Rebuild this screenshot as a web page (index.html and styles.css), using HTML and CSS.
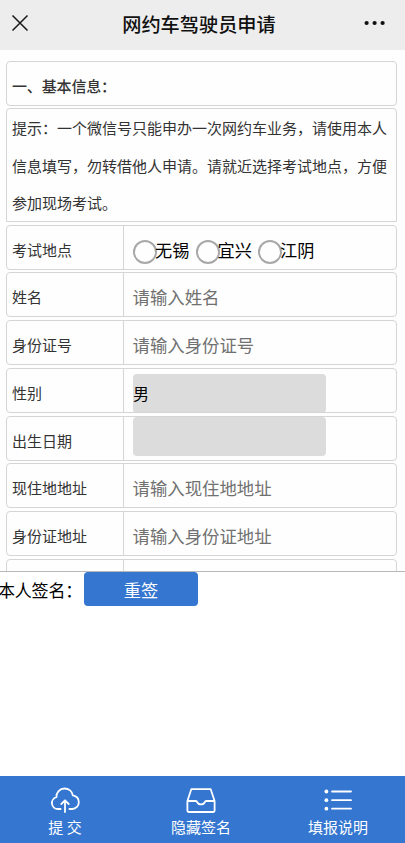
FILE: index.html
```html
<!DOCTYPE html>
<html lang="zh-CN">
<head>
<meta charset="utf-8">
<meta name="viewport" content="width=device-width, initial-scale=1">
<title>网约车驾驶员申请</title>
<link rel="stylesheet" href="styles.css">
</head>
<body>
<header class="topbar">
  <svg class="close" viewBox="0 0 18 18"><path d="M1.5 1.5 16.5 16.5M16.5 1.5 1.5 16.5"/></svg>
  <h1>网约车驾驶员申请</h1>
  <svg class="more" viewBox="0 0 22 6"><circle cx="2.6" cy="3" r="2.1"/><circle cx="10.6" cy="3" r="2.1"/><circle cx="18.6" cy="3" r="2.1"/></svg>
</header>
<main class="form">
  <h2 class="card heading">一、基本信息：</h2>
  <p class="card hint">提示：一个微信号只能申办一次网约车业务，请使用本人信息填写，勿转借他人申请。请就近选择考试地点，方便参加现场考试。</p>
  <div class="card row"><div class="label">考试地点</div><div class="field radios">
    <label><i class="radio"></i><span>无锡</span></label><label><i class="radio"></i><span>宜兴</span></label><label><i class="radio"></i><span>江阴</span></label>
  </div></div>
  <div class="card row"><div class="label">姓名</div><div class="field placeholder">请输入姓名</div></div>
  <div class="card row"><div class="label">身份证号</div><div class="field placeholder">请输入身份证号</div></div>
  <div class="card row"><div class="label">性别</div><div class="field"><div class="readonly gender">男</div></div></div>
  <div class="card row"><div class="label">出生日期</div><div class="field"><div class="readonly birth"></div></div></div>
  <div class="card row"><div class="label">现住地地址</div><div class="field placeholder">请输入现住地地址</div></div>
  <div class="card row"><div class="label">身份证地址</div><div class="field placeholder">请输入身份证地址</div></div>
  <div class="card row"><div class="label"></div><div class="field"></div></div>
</main>
<section class="signature">
  <span class="sign-label">本人签名：</span>
  <button class="resign" type="button">重签</button>
</section>
<nav class="tabs">
  <a class="tab">
    <svg viewBox="0 0 30 28"><path d="M10.6 23H7.9a6 6 0 0 1-1.5-11.8C6 6.400 9.900 2.500 14.500 2.500c4.300 0 7.700 2.900 8.300 6.900 3.600.6 6 3.300 6 6.800 0 3.700-2.800 6.800-6.500 6.800h-2.900M15 26V14.500M11.300 18 15 14.300 18.700 18"/></svg>
    <span>提 交</span>
  </a>
  <a class="tab">
    <svg viewBox="0 0 30 28"><path d="M5.300 3.200H24.700L28.600 15V24.500a1.500 1.500 0 0 1-1.500 1.500H2.900a1.500 1.500 0 0 1-1.500-1.500V15ZM1.400 15H10c.6 0 .9.400 1.200 1.100 1.400 3.100 6.200 3.100 7.600 0 .3-.7.600-1.100 1.200-1.100h8.600"/></svg>
    <span>隐藏签名</span>
  </a>
  <a class="tab">
    <svg viewBox="0 0 30 28"><path d="M9 5.500H28M9 14.200H28M9 22.700H28"/><g class="dots"><circle cx="3.400" cy="5.500" r="1.900"/><circle cx="3.400" cy="14.200" r="1.900"/><circle cx="3.400" cy="22.700" r="1.900"/></g></svg>
    <span>填报说明</span>
  </a>
</nav>
</body>
</html>
```

FILE: styles.css
```css
* { box-sizing: border-box; }
html, body { height: 100%; }
body {
  margin: 0;
  display: flex;
  flex-direction: column;
  overflow: hidden;
  background: #fefefe;
  color: #333;
  font-family: "Noto Sans CJK SC", sans-serif;
  font-size: 15px;
}
h1, h2, p { margin: 0; }

.topbar {
  flex: none;
  height: 50px;
  display: grid;
  grid-template-columns: 1fr auto 1fr;
  align-items: center;
  padding: 0 19px 4px 11px;
  background: #ededed;
}
.topbar h1 {
  color: #111;
  font-size: 19.200px;
  font-weight: 500;
  line-height: 28px;
  white-space: nowrap;
  padding-top: 1px;
  margin-left: 1px;
}
.close { width: 18px; height: 18px; fill: none; stroke: #1a1a1a; stroke-width: 1.5; }
.more { width: 22px; height: 6px; justify-self: end; fill: #111; }

.form {
  flex: none;
  height: 521px;
  overflow: hidden;
  padding: 10.700px 8px 0 6px;
  display: flex;
  flex-direction: column;
  gap: 2.750px;
}
.card {
  flex: none;
  border: 1px solid #d5d5d5;
  border-radius: 4px;
  overflow: hidden;
}
.heading {
  height: 45px;
  padding: 2px 5px 0;
  font-size: 15px;
  font-weight: 500;
  line-height: 43px;
  letter-spacing: -0.15px;
}
.hint {
  height: 114px;
  margin-bottom: -0.500px;
  padding: 0 4px 0 5px;
  line-height: 37.500px;
  border-radius: 4px 4px 0 0;
}
.row { height: 45px; display: flex; }
.label {
  width: 117px;
  padding: 2px 0 0 5px;
  line-height: 43px;
  border-right: 1px solid #d5d5d5;
}
.field { flex: 1; padding-left: 9px; color: #000; }
.placeholder { padding: 2px 0 0 8.500px; color: #707070; font-size: 17.400px; line-height: 43px; }
.radios { display: flex; gap: 6px; padding-top: 2px; font-size: 17.200px; line-height: 43px; }
.radios label { display: flex; width: 56.500px; }
.radio {
  flex: none;
  width: 24px;
  height: 24px;
  margin: 12px -2px 0 0;
  border: 2px solid #a8a8a8;
  border-radius: 50%;
}
.readonly { width: 193px; height: 39px; border-radius: 4px; background: #dcdcdc; font-size: 16px; line-height: 38px; }
.gender { margin-top: 5px; }
.birth { margin-top: 0; }

.signature {
  flex: 1;
  min-height: 0;
  display: flex;
  align-items: flex-start;
  border-top: 1px solid #b8b8b8;
  background: #fff;
}
.sign-label {
  width: 86px;
  margin-left: -2px;
  color: #000;
  font-size: 17px;
  letter-spacing: -0.2px;
  line-height: 36px;
  white-space: nowrap;
}
.resign {
  width: 114px;
  height: 34px;
  padding: 0;
  border: 0;
  border-radius: 4px;
  background: #3476d0;
  color: #fff;
  font: 17.200px/36px "Noto Sans CJK SC", sans-serif;
}

.tabs {
  flex: none;
  height: 67px;
  display: grid;
  grid-template-columns: 130px 142px 132px;
  background: #3476d0;
}
.tab {
  padding: 10px 0 0;
  display: flex;
  flex-direction: column;
  align-items: center;
  color: #fff;
  line-height: 22px;
}
.tab svg {
  width: 30px;
  height: 28px;
  margin-bottom: 2px;
  fill: none;
  stroke: #fff;
  stroke-width: 1.800;
  stroke-linecap: round;
  stroke-linejoin: round;
}
.tab .dots { fill: #fff; stroke: none; }
```
